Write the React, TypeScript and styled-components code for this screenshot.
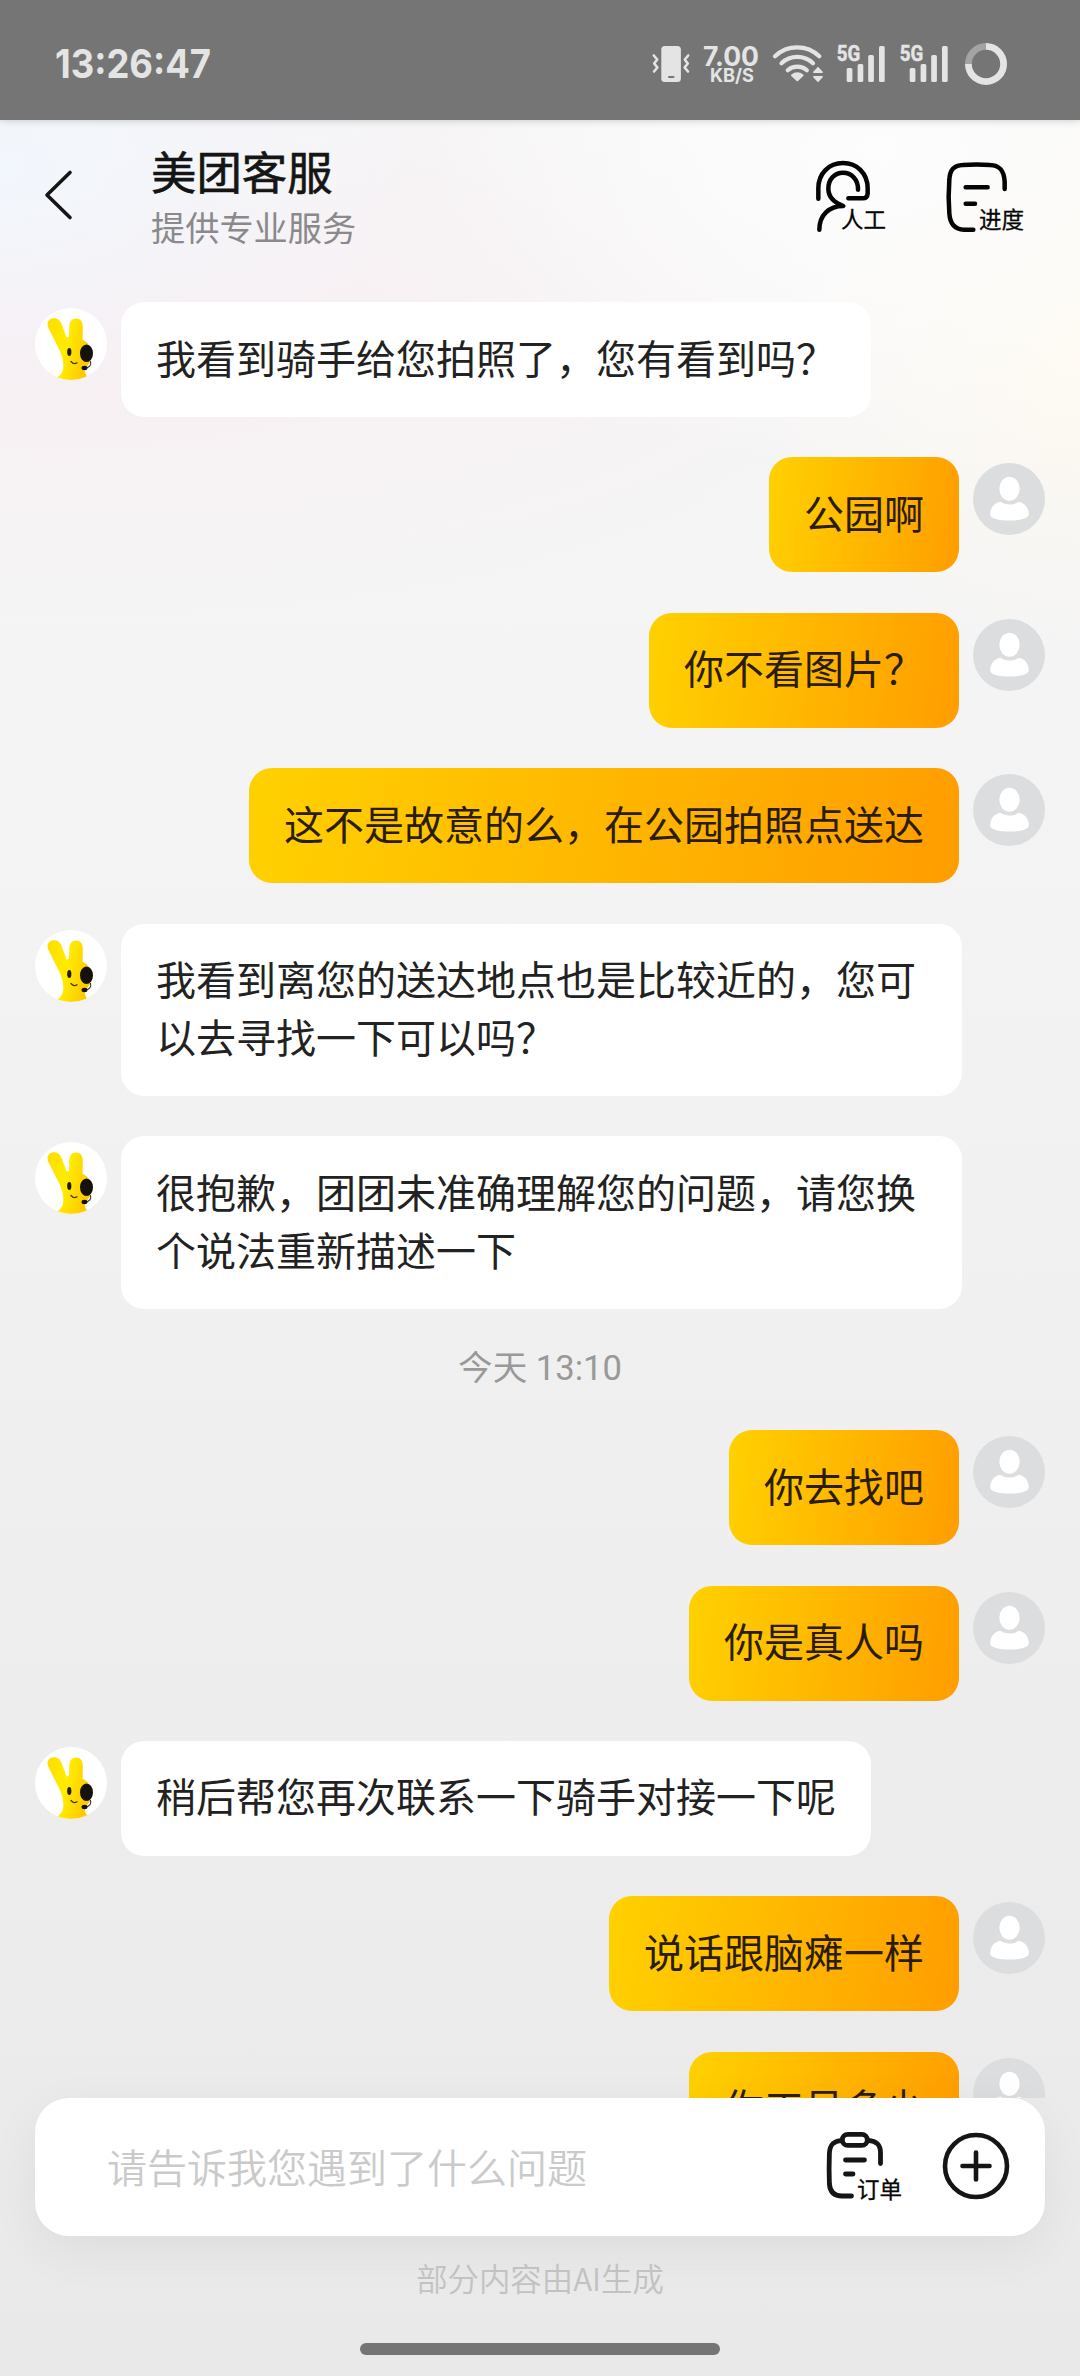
import React from 'react';
import styled, { createGlobalStyle } from 'styled-components';

const GlobalStyle = createGlobalStyle`
  * { box-sizing: border-box; }
  html, body { margin: 0; padding: 0; }
  body {
    width: 1080px;
    height: 2376px;
    overflow: hidden;
    font-family: Roboto, "Noto Sans CJK SC", sans-serif;
  }
`;

const cjk = '"Noto Sans CJK SC", sans-serif';

const Screen = styled.div`
  width: 1080px;
  height: 2376px;
  display: flex;
  flex-direction: column;
  overflow: hidden;
  background:
    radial-gradient(ellipse 420px 240px at 0 170px, rgba(242, 247, 253, 1), rgba(242, 247, 253, 0)),
    radial-gradient(ellipse 460px 330px at 880px 150px, rgba(253, 253, 253, 1), rgba(253, 253, 253, 0)),
    radial-gradient(ellipse 330px 300px at 1080px 350px, rgba(254, 249, 240, 1), rgba(254, 249, 240, 0)),
    radial-gradient(ellipse 900px 290px at 60px 330px, rgba(248, 238, 242, 1), rgba(248, 238, 242, 0)),
    linear-gradient(180deg, #f7f7f8 0, #f5f5f5 600px, #e9e9e9 2376px);
`;

const StatusBar = styled.header`
  flex: none;
  height: 120px;
  padding: 0 72px 0 55px;
  display: flex;
  align-items: center;
  justify-content: space-between;
  background: #757575;
  box-shadow: 0 0 8px rgba(0, 0, 0, 0.22);
`;

const Clock = styled.svg`
  display: block;
  overflow: visible;
  margin-top: 8px;
  font: 700 40px Inter, sans-serif;
  fill: #e4e4e4;
`;

const StatusIcons = styled.div`
  display: flex;
  align-items: center;
  margin-top: 8px;
`;

const Glyph = styled.svg<{ $ml?: number; $lift?: number }>`
  display: block;
  flex: none;
  overflow: visible;
  margin-left: ${(p) => p.$ml ?? 0}px;
  margin-bottom: ${(p) => p.$lift ?? 0}px;
`;

const Header = styled.div`
  flex: none;
  height: 150px;
  padding: 0 56px 0 44px;
  display: flex;
  align-items: flex-start;
`;

const Back = styled.button`
  margin: 48px 0 0;
  padding: 0;
  width: 107px;
  height: 54px;
  border: 0;
  background: none;
`;

const Heading = styled.div`
  flex: 1;
  padding-top: 19px;
  font-family: ${cjk};
`;

const Title = styled.h1`
  margin: 0;
  font-size: 45.4px;
  line-height: 62px;
  font-weight: 400;
  -webkit-text-stroke: 0.6px #151515;
  color: #151515;
`;

const Subtitle = styled.p`
  margin: 1px 0 0;
  font-size: 34.2px;
  line-height: 48px;
  color: #8b898b;
`;

const Action = styled.div<{ $w: number; $ml?: number }>`
  position: relative;
  width: ${(p) => p.$w}px;
  height: 76px;
  margin-left: ${(p) => p.$ml ?? 0}px;
  margin-top: 38px;
`;

const ActionLabel = styled.span`
  position: absolute;
  right: 0;
  bottom: 1px;
  font: 400 22.5px/30px ${cjk};
  -webkit-text-stroke: 0.3px #050505;
  color: #050505;
  white-space: nowrap;
`;

const Chat = styled.main`
  flex: none;
  height: 1828px;
  padding: 32px 35px 0;
  display: flex;
  flex-direction: column;
  gap: 40.4px;
  overflow: hidden;
`;

const Row = styled.div<{ $mine?: boolean }>`
  flex: none;
  display: flex;
  flex-direction: ${(p) => (p.$mine ? 'row-reverse' : 'row')};
  align-items: flex-start;
  gap: 14px;
`;

const Avatar = styled.svg`
  display: block;
  flex: none;
  width: 72px;
  height: 72px;
  margin-top: 6px;
`;

const Bubble = styled.div<{ $mine?: boolean }>`
  max-width: 841px;
  padding: 26.5px 35px 30.9px;
  border-radius: 23px;
  font-family: ${cjk};
  font-size: 40px;
  line-height: 57.6px;
  color: ${(p) => (p.$mine ? '#2b1d05' : '#222')};
  background: ${(p) => (p.$mine ? 'linear-gradient(98deg, #ffd100 0%, #ff9d00 100%)' : '#fff')};
`;

const Divider = styled.div`
  flex: none;
  height: 40.4px;
  padding-bottom: 4px;
  display: flex;
  align-items: center;
  justify-content: center;
  font-size: 34.6px;
  line-height: 40px;
  color: #999;
`;

const Composer = styled.div`
  flex: none;
  height: 138px;
  margin: 0 35px;
  padding: 0 35px 0 72px;
  display: flex;
  align-items: center;
  background: #fff;
  border-radius: 34px;
  box-shadow: 0 14px 50px rgba(0, 0, 0, 0.06);
`;

const Placeholder = styled.span`
  flex: 1;
  padding-bottom: 2px;
  font: 350 40px/58px ${cjk};
  color: #cacaca;
`;

const OrderAction = styled(Action)`
  margin-top: -2px;
`;

const Footer = styled.footer`
  flex: 1;
  display: flex;
  flex-direction: column;
  align-items: center;
  padding-top: 19px;
  font: 350 31.4px/46px ${cjk};
  color: #c2c2c2;
`;

const HomeBar = styled.div`
  width: 360px;
  height: 12px;
  margin-top: 42px;
  border-radius: 6px;
  background: #757575;
`;

const light = '#e4e4e4';

const VibrateIcon = () => (
  <Glyph width="38" height="44" viewBox="652 42 38 44">
    <rect x="661.3" y="46" width="19.6" height="36" rx="3.5" fill={light} />
    <rect x="668" y="76" width="6.5" height="2" rx="1" fill="#757575" />
    <path d="M653.8 55.5l3.400 4-3 4 3.200 4-3.400 4M688.200 55.500l-3.400 4 3 4-3.200 4 3.400 4" fill="none" stroke={light} strokeWidth="2.6" strokeLinecap="round" strokeLinejoin="round" />
  </Glyph>
);

const SpeedMeter = () => (
  <Glyph $ml={13} width="56" height="44" viewBox="703 42 56 44" fill={light} fontFamily="Inter, sans-serif" fontWeight="700">
    <text x="703" y="65.500" fontSize="27" textLength="56" lengthAdjust="spacingAndGlyphs">7.00</text>
    <text x="710" y="81.800" fontSize="18.500" textLength="44" lengthAdjust="spacingAndGlyphs">KB/S</text>
  </Glyph>
);

const WifiIcon = () => (
  <Glyph $ml={12} width="54" height="44" viewBox="771 42 54 44" fill="none" stroke={light} strokeWidth="4.2" strokeLinecap="round">
    <path d="M775 56.2a32 32 0 0 1 44.3 0" />
    <path d="M781.5 63.2a23 23 0 0 1 31.5 0" />
    <path d="M787.7 70.2a14.5 14.5 0 0 1 19.2 0" />
    <path d="M792 75.3q5.300-4 10.600 0l-5.300 5z" fill={light} strokeWidth="2" strokeLinejoin="round" />
    <path d="M818 67.800l-4.200 4.400h8.400zM818 81.200l-4.200-4.400h8.400z" fill={light} strokeWidth="1.4" strokeLinejoin="round" />
  </Glyph>
);

const SignalIcon = ({ ml }: { ml: number }) => (
  <Glyph $ml={ml} width="49" height="44" viewBox="836 42 49 44" fill={light}>
    <text x="836.8" y="60.5" fontSize="21.5" fontWeight="700" fontFamily="Roboto, sans-serif" textLength="23.5" lengthAdjust="spacingAndGlyphs" stroke={light} strokeWidth="0.5">5G</text>
    <rect x="846.7" y="68" width="5.7" height="14" rx="1.5" />
    <rect x="857.6" y="64" width="5.7" height="18" rx="1.5" />
    <rect x="868.2" y="55" width="5.7" height="27" rx="1.5" />
    <rect x="879" y="46" width="5.7" height="36" rx="1.5" />
  </Glyph>
);

const BatteryRing = () => (
  <Glyph $ml={16} width="44" height="44" viewBox="964 42 44 44" fill="none" strokeWidth="6.8">
    <path d="M986 46.4a17.6 17.6 0 1 1-17.6 17.6" stroke={light} />
    <path d="M968.4 64a17.6 17.6 0 0 1 17.6-17.6" stroke="#a3a3a3" />
  </Glyph>
);

const BotAvatar = () => (
  <Avatar viewBox="0 0 72 72">
    <defs>
      <clipPath id="botClip"><circle cx="36" cy="36" r="36" /></clipPath>
      <linearGradient id="botBody" x1="0" y1="0" x2="1" y2="0.3">
        <stop offset="0" stopColor="#ffdc00" />
        <stop offset="0.5" stopColor="#ffec00" />
        <stop offset="1" stopColor="#ffc800" />
      </linearGradient>
    </defs>
    <circle cx="36" cy="36" r="36" fill="#fff" />
    <g clipPath="url(#botClip)">
      <path
        d="M13.2 19.5C11 14 14.5 10.3 19 10.3c4 0 6.3 2.2 8 6.7l4.6 12.5 2.4-.8.3-10c.1-5.2 2.6-8.2 6.8-8.2s6.7 3 6.7 8l-.2 13.2C54 35 57 40 56.600 46.800c-.4 6-2.500 10.200-6.600 13.200-1 3.500.4 6.500 2.500 8.800V73H22v-3.500c4-2.600 6-5.500 6.300-10.300.3-5.500-1.300-11.200-3.600-16.600z"
        fill="url(#botBody)"
      />
      <ellipse cx="34.3" cy="44" rx="2.1" ry="4" fill="#241c00" />
      <ellipse cx="51.5" cy="45.3" rx="6.5" ry="8.8" fill="#15120c" />
      <path d="M36 53.5c1.8 2.2 4 2.6 6 1.3" fill="none" stroke="#4a3500" strokeWidth="1.3" strokeLinecap="round" />
      <path d="M55.5 53c1 4-1 6.5-5 7" fill="none" stroke="#333" strokeWidth="1.1" />
      <ellipse cx="49.5" cy="60" rx="3" ry="2.2" fill="#15120c" />
    </g>
  </Avatar>
);

const UserAvatar = () => (
  <Avatar viewBox="0 0 72 72">
    <circle cx="36" cy="36" r="36" fill="#dcdddf" />
    <ellipse cx="36.5" cy="25.8" rx="10.2" ry="12" fill="#fff" />
    <path d="M27.5 38.8C21 40 17.2 45 17.2 51.5c0 4 9 6 19.3 6s19.3-2 19.3-6c0-6.5-3.8-11.5-10.3-12.7-5 3.5-13 3.5-18 0z" fill="#fff" />
  </Avatar>
);

const AgentIcon = () => (
  <Glyph width="72" height="76" viewBox="100 54 216 228" fill="none" stroke="#050505" strokeWidth="13.5" strokeLinecap="round" strokeLinejoin="round">
    <path d="M113 176V145C113 100 145 69 187 69S261 100 261 145V160Q260 175 246 175H203" />
    <path d="M232 149C233 119 213 98 187 98S143 119 143 146C143 168 157 186 188 198C145 198 116 225 116 269" />
  </Glyph>
);

const ProgressIcon = () => (
  <Glyph width="78" height="76" viewBox="496 54 234 228" fill="none" stroke="#050505" strokeWidth="13.5" strokeLinecap="round" strokeLinejoin="round">
    <path d="M672 147V125C670 92 658 76 628 75Q588 72 546 75C518 76 507 91 506 120Q502 170 506 220C508 252 522 268 550 269H578" />
    <path d="M555 142H621M555 191H583" />
  </Glyph>
);

const OrderIcon = () => (
  <Glyph width="76" height="76" viewBox="826 2128 76 76" fill="none" stroke="#151515" strokeWidth="4.8" strokeLinecap="round" strokeLinejoin="round">
    <rect x="842.3" y="2134.4" width="25" height="11" rx="5.5" />
    <path d="M842 2140.5C833 2141 830 2145 829.4 2153Q828.8 2170 829.4 2184C830 2192 834 2196 842 2196H851.5M868 2140.5C877 2141 880.5 2145 880.5 2153V2163.5" />
    <path d="M845.5 2160H864.5M845.5 2174H853" />
  </Glyph>
);

const PlusIcon = () => (
  <Glyph $ml={40} $lift={3} width="68" height="68" viewBox="0 0 68 68" fill="none" stroke="#151515" strokeWidth="4.6" strokeLinecap="round">
    <circle cx="34" cy="34" r="31" />
    <path d="M34 20.5v27M20.5 34h27" />
  </Glyph>
);

const BackIcon = () => (
  <Glyph width="30" height="54" viewBox="0 0 30 54" fill="none" stroke="#151515" strokeWidth="3.6" strokeLinecap="round" strokeLinejoin="round">
    <path d="M26 4.500L3 27L26 49.500" />
  </Glyph>
);

type Item = { kind: 'bot' | 'me' | 'time'; text: string };

const items: Item[] = [
  { kind: 'bot', text: '我看到骑手给您拍照了，您有看到吗？' },
  { kind: 'me', text: '公园啊' },
  { kind: 'me', text: '你不看图片？' },
  { kind: 'me', text: '这不是故意的么，在公园拍照点送达' },
  { kind: 'bot', text: '我看到离您的送达地点也是比较近的，您可以去寻找一下可以吗？' },
  { kind: 'bot', text: '很抱歉，团团未准确理解您的问题，请您换个说法重新描述一下' },
  { kind: 'time', text: '今天 13:10' },
  { kind: 'me', text: '你去找吧' },
  { kind: 'me', text: '你是真人吗' },
  { kind: 'bot', text: '稍后帮您再次联系一下骑手对接一下呢' },
  { kind: 'me', text: '说话跟脑瘫一样' },
  { kind: 'me', text: '你工号多少' },
];

export default function App() {
  return (
    <Screen lang="zh-CN">
      <GlobalStyle />
      <StatusBar>
        <Clock width="158" height="44" viewBox="0 0 158 44">
          <text x="0" y="36" textLength="156" lengthAdjust="spacingAndGlyphs">13:26:47</text>
        </Clock>
        <StatusIcons>
          <VibrateIcon />
          <SpeedMeter />
          <WifiIcon />
          <SignalIcon ml={11} />
          <SignalIcon ml={14} />
          <BatteryRing />
        </StatusIcons>
      </StatusBar>
      <Header>
        <Back aria-label="返回">
          <BackIcon />
        </Back>
        <Heading>
          <Title>美团客服</Title>
          <Subtitle>提供专业服务</Subtitle>
        </Heading>
        <Action $w={72}>
          <AgentIcon />
          <ActionLabel>人工</ActionLabel>
        </Action>
        <Action $w={78} $ml={60}>
          <ProgressIcon />
          <ActionLabel>进度</ActionLabel>
        </Action>
      </Header>
      <Chat>
        {items.map((item, i) =>
          item.kind === 'time' ? (
            <Divider key={i}>{item.text}</Divider>
          ) : (
            <Row key={i} $mine={item.kind === 'me'}>
              {item.kind === 'me' ? <UserAvatar /> : <BotAvatar />}
              <Bubble $mine={item.kind === 'me'}>{item.text}</Bubble>
            </Row>
          ),
        )}
      </Chat>
      <Composer>
        <Placeholder>请告诉我您遇到了什么问题</Placeholder>
        <OrderAction $w={76}>
          <OrderIcon />
          <ActionLabel>订单</ActionLabel>
        </OrderAction>
        <PlusIcon />
      </Composer>
      <Footer>
        部分内容由AI生成
        <HomeBar />
      </Footer>
    </Screen>
  );
}
